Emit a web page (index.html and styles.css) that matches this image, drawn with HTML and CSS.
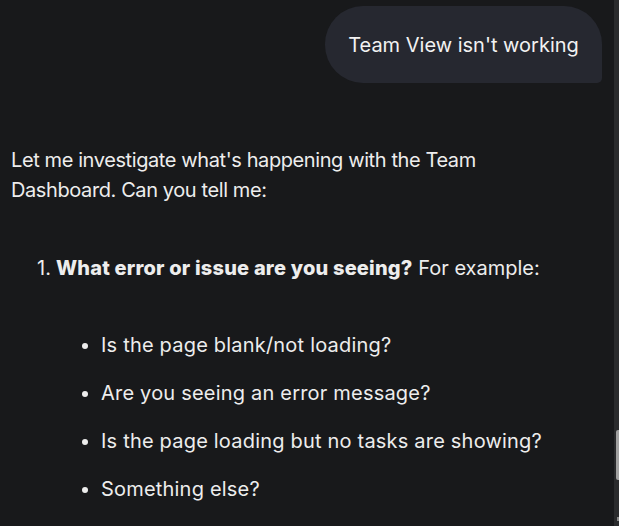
FILE: index.html
```html
<!DOCTYPE html>
<html>
<head>
<meta charset="utf-8">
<link rel="stylesheet" href="styles.css">
</head>
<body>
<div class="page">
  <main class="chat">
    <div class="user-row">
      <div class="bubble">Team View isn't working</div>
    </div>
    <div class="reply">
      <p class="intro">Let me investigate what's happening with the Team Dashboard. Can you tell me:</p>
      <ol class="steps">
        <li><span class="num">1.</span><span><strong>What error or issue are you seeing?</strong> For example:</span></li>
      </ol>
      <ul class="bullets">
        <li>Is the page blank/not loading?</li>
        <li>Are you seeing an error message?</li>
        <li>Is the page loading but no tasks are showing?</li>
        <li>Something else?</li>
      </ul>
    </div>
  </main>
  <div class="scrollbar"><div class="thumb"></div><div class="arrow"></div></div>
</div>
</body>
</html>
```
FILE: styles.css
```css
* { box-sizing: border-box; }
html, body { margin: 0; padding: 0; height: 100%; overflow: hidden; }
body {
  background: #18191b;
  color: #ededed;
  font-family: Inter, "Noto Sans", sans-serif;
  font-size: 20px;
}
.page { display: flex; height: 526px; }
.chat { flex: 1; padding: 6px 12px 0 11px; }
.user-row { display: flex; justify-content: flex-end; }
.bubble {
  background: #262830;
  height: 77px;
  width: 277px;
  display: flex;
  align-items: center;
  justify-content: center;
  border-radius: 38px 38px 5px 38px;
  color: #f2f2f2;
}
.reply { margin-top: 62px; max-width: 560px; }
.intro { margin: 0; line-height: 30px; letter-spacing: -0.4px; }
.steps { list-style: none; margin: 48px 0 0 0; padding: 0 0 0 26px; }
.steps li { display: flex; gap: 5px; line-height: 30px; }
.steps strong { font-weight: 800; letter-spacing: 0.2px; }
.bullets { list-style: none; margin: 47px 0 0 0; padding: 0 0 0 90px; letter-spacing: 0.2px; }
.bullets li { line-height: 30px; margin-bottom: 18px; position: relative; }
.bullets li::before {
  content: "";
  position: absolute;
  left: -19px;
  top: 13px;
  width: 6px;
  height: 6px;
  border-radius: 50%;
  background: #ededed;
}
.scrollbar { width: 5px; background: #2a2b2d; display: flex; flex-direction: column; align-items: flex-end; }
.thumb { margin-top: 430px; width: 3px; height: 50px; background: #a2a2a2; border-radius: 2px 0 0 2px; }
.arrow { margin-top: 37px; width: 2px; height: 4px; background: #8a8a8a; }
```
